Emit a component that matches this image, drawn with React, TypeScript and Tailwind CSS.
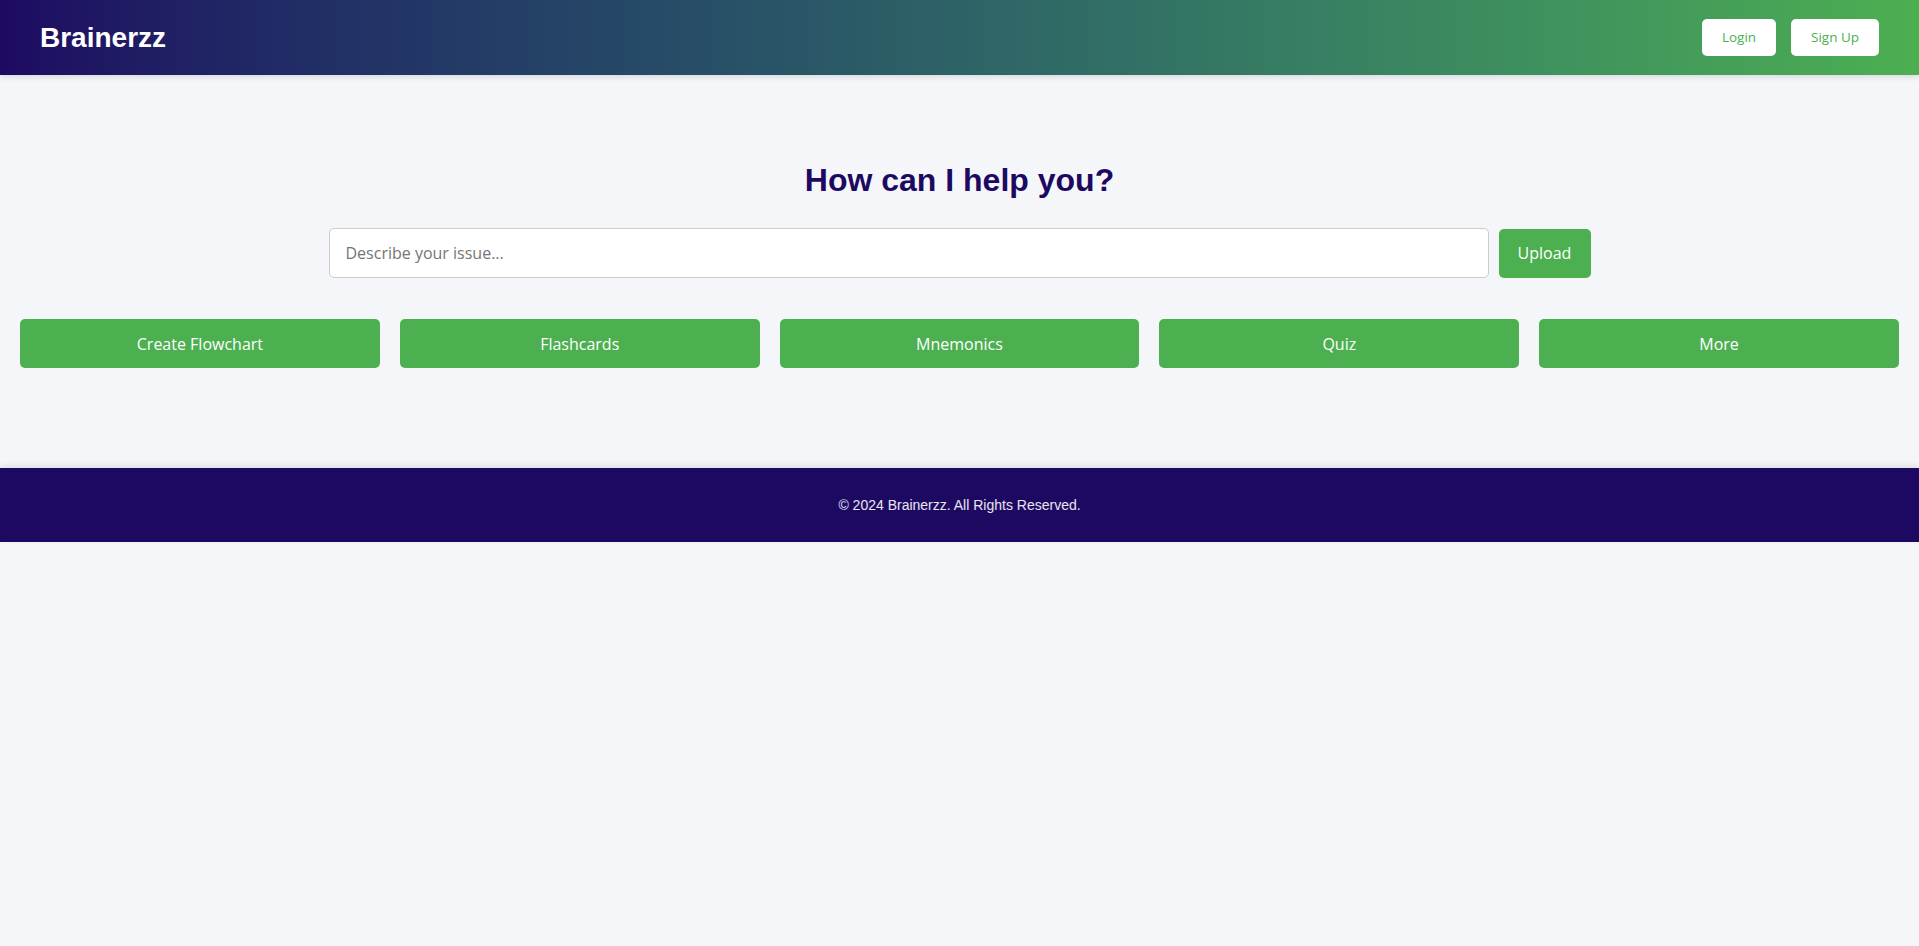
import * as React from 'react';

const sans = "font-['Liberation_Sans',Arial,sans-serif]";
const ui = "font-['Open_Sans','Noto_Sans',sans-serif]";

const features = ['Create Flowchart', 'Flashcards', 'Mnemonics', 'Quiz', 'More'];

const Header: React.FC = () => (
  <header className="relative z-10 flex h-[75px] items-center justify-between bg-gradient-to-r from-[#1e0962] to-[#4caf50] px-10 shadow-[0_2px_6px_rgba(0,0,0,0.12)]">
    <h1 className={`${sans} text-[28px] font-bold text-white`}>Brainerzz</h1>
    <div className="flex gap-[15px]">
      <button className={`${ui} h-[37px] w-[74px] rounded-[5px] bg-white text-[13.5px] text-[#4caf50]`}>
        Login
      </button>
      <button className={`${ui} h-[37px] w-[88px] rounded-[5px] bg-white text-[13.5px] text-[#4caf50]`}>
        Sign Up
      </button>
    </div>
  </header>
);

const Footer: React.FC = () => (
  <footer className="relative z-10 flex h-[74px] items-center justify-center bg-[#1e0962] shadow-[0_-2px_6px_rgba(0,0,0,0.1)]">
    <p className={`${sans} text-[14px] text-white/90`}>© 2024 Brainerzz. All Rights Reserved.</p>
  </footer>
);

export default function App() {
  return (
    <div className="min-h-[946px] bg-[#f4f6fa]">
      <Header />
      <main className="flex flex-col items-center pt-[87px] pb-[100px]">
        <h2 className={`${sans} mb-[29px] text-[32px] leading-[37px] font-bold text-[#1e0962]`}>
          How can I help you?
        </h2>
        <div className="flex items-center gap-[10px]">
          <input
            type="text"
            placeholder="Describe your issue..."
            className={`${ui} h-[50px] w-[1160px] rounded-[5px] border border-[#cccccc] bg-white px-4 text-[16px] text-[#333] placeholder:text-[#757575] outline-none`}
          />
          <button className={`${ui} h-[49px] w-[92px] rounded-[5px] bg-[#4caf50] text-[16px] text-white`}>
            Upload
          </button>
        </div>
        <div className="mt-[41px] flex w-full gap-5 px-5">
          {features.map((f) => (
            <button
              key={f}
              className={`${ui} h-[49px] flex-1 rounded-[5px] bg-[#4caf50] text-[16px] text-white`}
            >
              {f}
            </button>
          ))}
        </div>
      </main>
      <Footer />
    </div>
  );
}
